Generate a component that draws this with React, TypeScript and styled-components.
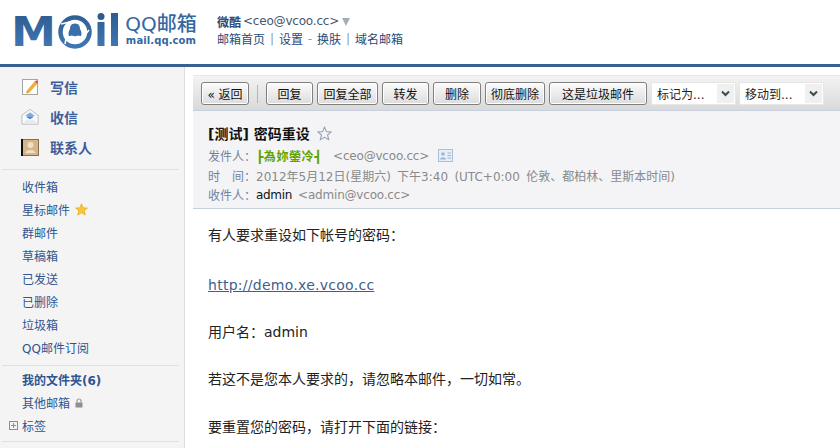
import React from 'react';
import styled, { createGlobalStyle } from 'styled-components';

const GlobalStyle = createGlobalStyle`
  html, body {
    margin: 0;
    padding: 0;
    background: #fff;
    overflow: hidden;
  }
  * {
    box-sizing: border-box;
  }
  body {
    font-family: 'DejaVu Sans', 'Noto Sans CJK SC', sans-serif;
    font-size: 12px;
    color: #000;
  }
`;

const Page = styled.div`
  width: 840px;
  height: 448px;
  display: flex;
  flex-direction: column;
  overflow: hidden;
`;

const TopBar = styled.header`
  height: 67px;
  flex: none;
  display: flex;
  align-items: flex-start;
  border-bottom: 3px solid #38618f;
  padding: 5px 0 0 11px;
`;

const LogoBox = styled.div`
  width: 206px;
  flex: none;
  display: flex;
  gap: 6px;
`;

const LogoWords = styled.div`
  display: flex;
  flex-direction: column;
  align-items: center;
  color: #34689f;
  width: 72px;
  margin-top: 8px;
`;

const LogoTitle = styled.div`
  font-size: 20px;
  line-height: 23px;
  font-weight: 500;
  white-space: nowrap;
`;

const LogoUrl = styled.div`
  font-size: 10px;
  line-height: 10px;
  font-weight: 700;
  letter-spacing: 0.1px;
  white-space: nowrap;
`;

const UserBlock = styled.div`
  display: flex;
  flex-direction: column;
  color: #2f4d7c;
  margin-top: 8px;
`;

const UserLine = styled.div`
  display: flex;
  align-items: center;
  height: 16px;
  font-size: 12px;
  letter-spacing: -0.2px;
  color: #46566e;
  white-space: nowrap;
`;

const UserName = styled.b`
  color: #2c4a77;
  font-weight: 700;
  letter-spacing: 0;
  margin-right: 2px;
`;

const Caret = styled.span`
  width: 0;
  height: 0;
  margin-left: 3px;
  margin-top: 2px;
  border-left: 4px solid transparent;
  border-right: 4px solid transparent;
  border-top: 8px solid #a6adb8;
`;

const NavLine = styled.nav`
  display: flex;
  align-items: center;
  height: 19px;
  font-size: 12px;
  color: #264a7c;
  white-space: nowrap;
`;

const NavSep = styled.span`
  width: 14px;
  text-align: center;
  color: #8a9cb5;
`;

const Main = styled.div`
  flex: 1;
  min-height: 0;
  display: flex;
`;

const Sidebar = styled.aside`
  width: 185px;
  flex: none;
  background: #f4f4f4;
  border-right: 1px solid #dedede;
  padding: 5px 5px 0 2px;
`;

const QuickList = styled.div`
  display: flex;
  flex-direction: column;
  padding-bottom: 7px;
`;

const QuickItem = styled.div`
  height: 30px;
  display: flex;
  align-items: center;
  gap: 11px;
  padding-left: 19px;
  font-size: 14px;
  font-weight: 700;
  color: #3f5e9c;
`;

const IconSlot = styled.span`
  width: 18px;
  height: 18px;
  display: flex;
  align-items: center;
  justify-content: center;
`;

const Divider = styled.div`
  height: 1px;
  background: #e0e0e0;
`;

const FolderList = styled.div<{ $top: number; $bottom: number }>`
  padding: ${({ $top, $bottom }) => `${$top}px 0 ${$bottom}px`};
`;

const FolderItem = styled.div<{ $bold?: boolean }>`
  height: 23px;
  display: flex;
  align-items: center;
  gap: 5px;
  padding-left: 20px;
  font-size: 12px;
  color: #2f5490;
  font-weight: ${({ $bold }) => ($bold ? 700 : 400)};
  position: relative;
`;

const Expander = styled.span`
  position: absolute;
  left: 7px;
  top: 7px;
  width: 9px;
  height: 9px;
  border: 1px solid #8d8d8d;
  background:
    linear-gradient(#8d8d8d, #8d8d8d) center / 5px 1px no-repeat,
    linear-gradient(#8d8d8d, #8d8d8d) center / 1px 5px no-repeat;
`;

const Reader = styled.main`
  flex: 1;
  min-width: 0;
  padding: 8px 0 0 8px;
`;

const Toolbar = styled.div`
  height: 36px;
  display: flex;
  align-items: center;
  padding: 1px 0 0 8px;
  border-top: 1px solid #e8e8e8;
  border-bottom: 1px solid #c6d0de;
  background: linear-gradient(#f3f3f3, #d9d9d9);
`;

const ToolButton = styled.button<{ $w: number }>`
  width: ${({ $w }) => $w}px;
  height: 23px;
  margin-right: 4px;
  padding: 0;
  border: 1px solid #7f7f7f;
  border-radius: 3px;
  background: linear-gradient(#fbfbfb, #dcdcdc);
  box-shadow: inset 0 0 0 1px #fff;
  font: 12px 'DejaVu Sans', 'Noto Sans CJK SC', sans-serif;
  color: #111;
  white-space: nowrap;
`;

const ToolSep = styled.span`
  width: 1px;
  height: 18px;
  margin: 0 8px 0 4px;
  background: #b5b5b5;
`;

const SelectBox = styled.div`
  width: 85px;
  height: 23px;
  margin-right: 3px;
  display: flex;
  align-items: center;
  justify-content: space-between;
  background: #fff;
  border: 1px solid #e6e6e6;
  padding-left: 5px;
  font-size: 12px;
  color: #222;
  white-space: nowrap;
`;

const SelectArrow = styled.span`
  width: 17px;
  height: 19px;
  margin-right: 1px;
  display: flex;
  align-items: center;
  justify-content: center;
  background: #f0f0f0;
`;

const MailHead = styled.section`
  height: 98px;
  padding: 12px 0 0 15px;
  background: #f4f4f6;
  border-bottom: 1px solid #c8d1df;
`;

const Subject = styled.h1`
  margin: 0 0 3px;
  height: 20px;
  display: flex;
  align-items: center;
  gap: 7px;
  font-size: 14px;
  font-weight: 700;
  color: #111;
`;

const MetaRow = styled.div`
  height: 19.5px;
  display: flex;
  align-items: center;
  font-size: 12px;
  color: #8a8a8a;
  white-space: nowrap;
  word-spacing: 2.5px;
`;

const MetaLabel = styled.span`
  width: 48px;
  flex: none;
  color: #6f83a0;
  display: flex;
  justify-content: space-between;
`;

const SenderName = styled.b`
  color: #5fa300;
  font-size: 12px;
  letter-spacing: 0.6px;
  margin: 0 11px 0 0;
`;

const Dark = styled.span`
  color: #111;
  margin-right: 6px;
  letter-spacing: -0.3px;
`;

const GreyMail = styled.span`
  letter-spacing: -0.2px;
`;

const CardSlot = styled.span`
  margin-left: 9px;
  display: flex;
`;

const MailBody = styled.article`
  padding: 14px 0 0 15px;
  font-size: 14px;
  color: #222;
`;

const BodyLine = styled.p<{ $after: number }>`
  margin: 0 0 ${({ $after }) => $after}px;
  line-height: 24px;
  white-space: nowrap;
`;

const MailLink = styled.a`
  color: #3f5f8f;
  text-decoration: underline;
  font-size: 14px;
  letter-spacing: 0.27px;
`;

const ComposeIcon = () => (
  <svg width="18" height="18" viewBox="0 0 18 18">
    <rect x="1.5" y="1.5" width="15" height="15" fill="#fff" stroke="#a5a5a5" />
    <path d="M6 13 L14 3.5 L16 5.5 L8 14.5 L5.5 15 Z" fill="#f2b632" stroke="#d08d1a" strokeWidth="0.6" />
    <path d="M14 3.5 L15.2 2.2 L17 4 L16 5.5 Z" fill="#d9433f" />
  </svg>
);

const InboxIcon = () => (
  <svg width="20" height="18" viewBox="0 0 20 18">
    <path d="M1 7 L10 0.5 L19 7 V17 H1 Z" fill="#fafbfc" stroke="#b4b8bd" />
    <path d="M2.5 7 L10 2 L17.5 7 L10 11 Z" fill="#eef1f5" />
    <path d="M5 7.5 L10 4 L15 7.5 L10 10.5 Z" fill="#7ea9dc" />
    <path d="M6 9 H14 L10 11.5 Z" fill="#4f82c0" />
    <path d="M2 16 L7 11.5 L10 13 L13 11.5 L18 16 Z" fill="#e6eaef" />
  </svg>
);

const ContactIcon = () => (
  <svg width="18" height="17" viewBox="0 0 18 17">
    <rect x="0.5" y="0.5" width="17" height="16" fill="#d6b588" stroke="#8b6f48" />
    <rect x="0" y="0" width="2" height="17" fill="#111" />
    <circle cx="9.5" cy="6" r="3" fill="#efe0c6" />
    <path d="M4.5 14 C5 10 14 10 14.5 14 Z" fill="#efe0c6" />
  </svg>
);

const StarIcon = ({ fill, stroke, size }: { fill: string; stroke: string; size: number }) => (
  <svg width={size} height={size} viewBox="0 0 16 16">
    <path
      d="M8 1 L10 6 L15.2 6.3 L11.2 9.6 L12.6 14.8 L8 11.9 L3.4 14.8 L4.8 9.6 L0.8 6.3 L6 6 Z"
      fill={fill}
      stroke={stroke}
      strokeWidth="1.2"
      strokeLinejoin="round"
    />
  </svg>
);

const LockIcon = () => (
  <svg width="8" height="10" viewBox="0 0 8 10">
    <path d="M2 4.5 V3 a2 2 0 0 1 4 0 V4.5" fill="none" stroke="#999" strokeWidth="1.2" />
    <rect x="0.5" y="4.5" width="7" height="5" fill="#8f8f8f" />
  </svg>
);

const ChevronIcon = () => (
  <svg width="9" height="7" viewBox="0 0 9 7">
    <path d="M1 1.5 L4.5 5 L8 1.5" fill="none" stroke="#3c4a52" strokeWidth="2" />
  </svg>
);

const CardIcon = () => (
  <svg width="15" height="13" viewBox="0 0 15 13">
    <rect x="0.5" y="0.5" width="14" height="12" fill="#e6eef8" stroke="#a8c0de" />
    <circle cx="5" cy="5" r="1.8" fill="#9db6d6" />
    <path d="M2 10.5 C2.5 7.5 7.5 7.5 8 10.5 Z" fill="#9db6d6" />
    <path d="M9.5 4 H13 M9.5 6.5 H13 M9.5 9 H13" stroke="#9db6d6" />
  </svg>
);

// viewBox leaves room round the M so the whole glyph box stays inside the svg
const LogoMark = () => (
  <svg width="108" height="54" viewBox="-3 -8 108 54">
    <defs>
      <linearGradient id="logoBlue" x1="0" y1="0" x2="0" y2="36" gradientUnits="userSpaceOnUse">
        <stop offset="0" stopColor="#2f5c8f" />
        <stop offset="1" stopColor="#4078b6" />
      </linearGradient>
    </defs>
    <text
      x="-3"
      y="33"
      fontFamily="'DejaVu Sans', sans-serif"
      fontWeight="700"
      fontSize="41"
      textLength="45"
      lengthAdjust="spacingAndGlyphs"
      fill="url(#logoBlue)"
    >
      M
    </text>
    <circle cx="61" cy="19" r="14.5" fill="none" stroke="url(#logoBlue)" strokeWidth="4.5" />
    <path d="M47 11 L60 8 M75 17 L66 28 M51 31 L53 21" stroke="#fff" strokeWidth="1.6" fill="none" />
    <path d="M61 10.5 C65 10.5 66 13.5 66 16 C67.5 18 68 21 67 23 C65.5 23 64.5 22.5 64 22.5 C62.5 23.5 59.5 23.5 58 22.5 C57.5 22.5 56.5 23 55 23 C54 21 54.5 18 56 16 C56 13.5 57 10.5 61 10.5 Z" fill="#3a70ab" />
    <circle cx="87" cy="3.5" r="3.5" fill="#2f5c8f" />
    <rect x="83.5" y="9" width="7" height="24" fill="url(#logoBlue)" />
    <rect x="97" y="0" width="7" height="33" fill="url(#logoBlue)" />
  </svg>
);

const folders = ['收件箱', '星标邮件', '群邮件', '草稿箱', '已发送', '已删除', '垃圾箱', 'QQ邮件订阅'];

const buttons: [string, number][] = [
  ['回复', 47],
  ['回复全部', 61],
  ['转发', 47],
  ['删除', 48],
  ['彻底删除', 60],
  ['这是垃圾邮件', 98],
];

export default function App() {
  return (
    <Page>
      <GlobalStyle />
      <TopBar>
        <LogoBox>
          <LogoMark />
          <LogoWords>
            <LogoTitle>QQ邮箱</LogoTitle>
            <LogoUrl>mail.qq.com</LogoUrl>
          </LogoWords>
        </LogoBox>
        <UserBlock>
          <UserLine>
            <UserName>微酷</UserName>&lt;ceo@vcoo.cc&gt;
            <Caret />
          </UserLine>
          <NavLine>
            邮箱首页<NavSep>|</NavSep>设置<NavSep>-</NavSep>换肤<NavSep>|</NavSep>域名邮箱
          </NavLine>
        </UserBlock>
      </TopBar>
      <Main>
        <Sidebar>
          <QuickList>
            <QuickItem>
              <IconSlot>
                <ComposeIcon />
              </IconSlot>
              写信
            </QuickItem>
            <QuickItem>
              <IconSlot>
                <InboxIcon />
              </IconSlot>
              收信
            </QuickItem>
            <QuickItem>
              <IconSlot>
                <ContactIcon />
              </IconSlot>
              联系人
            </QuickItem>
          </QuickList>
          <Divider />
          <FolderList $top={5} $bottom={6}>
            {folders.map((name) => (
              <FolderItem key={name}>
                {name}
                {name === '星标邮件' && <StarIcon fill="#f5c842" stroke="#eab52c" size={13} />}
              </FolderItem>
            ))}
          </FolderList>
          <Divider />
          <FolderList $top={2} $bottom={4}>
            <FolderItem $bold>我的文件夹(6)</FolderItem>
            <FolderItem>
              其他邮箱
              <LockIcon />
            </FolderItem>
            <FolderItem>
              <Expander />
              标签
            </FolderItem>
          </FolderList>
          <Divider />
        </Sidebar>
        <Reader>
          <Toolbar>
            <ToolButton $w={48}>« 返回</ToolButton>
            <ToolSep />
            {buttons.map(([label, w]) => (
              <ToolButton key={label} $w={w}>
                {label}
              </ToolButton>
            ))}
            <SelectBox>
              标记为...
              <SelectArrow>
                <ChevronIcon />
              </SelectArrow>
            </SelectBox>
            <SelectBox>
              移动到...
              <SelectArrow>
                <ChevronIcon />
              </SelectArrow>
            </SelectBox>
          </Toolbar>
          <MailHead>
            <Subject>
              [测试] 密码重设
              <StarIcon fill="none" stroke="#9aa7b8" size={15} />
            </Subject>
            <MetaRow>
              <MetaLabel>发件人：</MetaLabel>
              <SenderName>┣為妳鎣冷┫</SenderName>
              <GreyMail>&lt;ceo@vcoo.cc&gt;</GreyMail>
              <CardSlot>
                <CardIcon />
              </CardSlot>
            </MetaRow>
            <MetaRow>
              <MetaLabel>
                <span>时</span>
                <span>间：</span>
              </MetaLabel>
              2012年5月12日(星期六) 下午3:40 (UTC+0:00 伦敦、都柏林、里斯本时间)
            </MetaRow>
            <MetaRow>
              <MetaLabel>收件人：</MetaLabel>
              <Dark>admin</Dark>
              <GreyMail>&lt;admin@vcoo.cc&gt;</GreyMail>
            </MetaRow>
          </MailHead>
          <MailBody>
            <BodyLine $after={26}>有人要求重设如下帐号的密码：</BodyLine>
            <BodyLine $after={23}>
              <MailLink href="#">http://demo.xe.vcoo.cc</MailLink>
            </BodyLine>
            <BodyLine $after={23}>用户名：admin</BodyLine>
            <BodyLine $after={24}>若这不是您本人要求的，请忽略本邮件，一切如常。</BodyLine>
            <BodyLine $after={24}>要重置您的密码，请打开下面的链接：</BodyLine>
          </MailBody>
        </Reader>
      </Main>
    </Page>
  );
}
